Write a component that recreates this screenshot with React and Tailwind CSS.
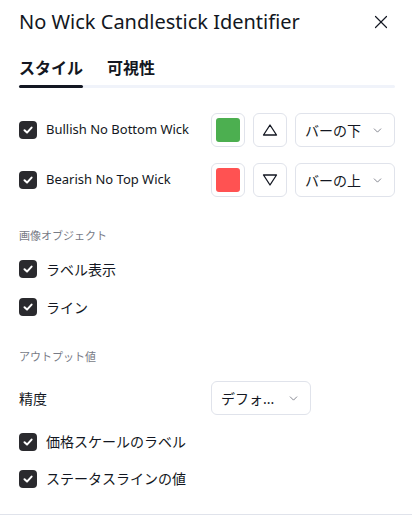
import { X, ChevronDown } from 'lucide-react';

const font = { fontFamily: '"Noto Sans", "Noto Sans CJK JP", sans-serif' };

function Check({ label, latin }) {
    return (
        <label className={`flex items-center gap-[9px] ${latin ? 'text-[13px]' : 'text-[14px]'} text-[#131722]`}>
            <span className="w-[18px] h-[18px] rounded-[4px] bg-[#2a2a2e] flex items-center justify-center">
                <svg width="12" height="12" viewBox="0 0 12 12" fill="none">
                    <path d="M2.5 6.3 L5 8.6 L9.6 3.6" stroke="white" strokeWidth="2" strokeLinecap="round" strokeLinejoin="round" />
                </svg>
            </span>
            <span>{label}</span>
        </label>
    );
}

function Select({ value, width = 'w-[100px]' }) {
    return (
        <div className={`${width} h-[34px] border border-[#e0e3eb] rounded-[6px] flex items-center justify-between pl-[9px] pr-[10px] text-[14px] text-[#131722]`}>
            <span>{value}</span>
            <ChevronDown className="w-[13px] h-[13px] text-[#6a6d78]" strokeWidth={1.5} />
        </div>
    );
}

function PlotRow({ label, color, up, place }) {
    return (
        <div className="flex items-center h-[34px]">
            <div className="flex-1">
                <Check label={label} latin />
            </div>
            <div className="flex items-center gap-2">
                <div className="w-[34px] h-[34px] border border-[#e0e3eb] rounded-[6px] flex items-center justify-center">
                    <div className={`w-[24px] h-[24px] rounded-[3px] ${color}`} />
                </div>
                <div className="w-[34px] h-[34px] border border-[#e0e3eb] rounded-[6px] flex items-center justify-center">
                    <svg width="16" height="14" viewBox="0 0 16 14" fill="none">
                        {up ? (
                            <path d="M8 2 L14.5 12 L1.5 12 Z" stroke="#131722" strokeWidth="1.3" strokeLinejoin="round" />
                        ) : (
                            <path d="M8 12 L14.5 2 L1.5 2 Z" stroke="#131722" strokeWidth="1.3" strokeLinejoin="round" />
                        )}
                    </svg>
                </div>
                <Select value={place} />
            </div>
        </div>
    );
}

export default function App() {
    return (
        <div className="w-[412px] h-[516px] bg-white overflow-hidden" style={font}>
            <div className="h-[44px] flex items-center justify-between pl-[19px] pr-[20px]">
                <h1 className="text-[20px] text-[#131722]">No Wick Candlestick Identifier</h1>
                <X className="w-[22px] h-[22px] text-[#131722]" strokeWidth={1.3} />
            </div>

            <div className="px-[19px] pr-[17px]">
                <div className="pt-[14px] flex gap-[24px] h-[34px] text-[16px] font-bold text-[#131722] leading-[20px]">
                    <span>スタイル</span>
                    <span>可視性</span>
                </div>
                <div className="mt-[7px] h-[3px] bg-[#f0f3fa] rounded-full">
                    <div className="w-[64px] h-[3px] bg-[#131722] rounded-full" />
                </div>

                <div className="mt-[25px] flex flex-col gap-4">
                    <PlotRow label="Bullish No Bottom Wick" color="bg-[#4caf50]" up place="バーの下" />
                    <PlotRow label="Bearish No Top Wick" color="bg-[#ff5252]" place="バーの上" />
                </div>

                <div className="mt-[31px] h-[16px] text-[11px] leading-[16px] text-[#787b86]">画像オブジェクト</div>
                <div className="mt-[6px]">
                    <div className="h-[38px] flex items-center"><Check label="ラベル表示" /></div>
                    <div className="h-[38px] flex items-center"><Check label="ライン" /></div>
                </div>

                <div className="mt-[23px] h-[16px] text-[11px] leading-[16px] text-[#787b86]">アウトプット値</div>
                <div className="mt-4 flex items-center h-[34px]">
                    <div className="w-[192px] text-[14px] text-[#131722]">精度</div>
                    <Select value="デフォ..." width="w-[100px]" />
                </div>
                <div className="mt-[8px]">
                    <div className="h-[37px] flex items-center"><Check label="価格スケールのラベル" /></div>
                    <div className="h-[37px] flex items-center"><Check label="ステータスラインの値" /></div>
                </div>
            </div>
            <div className="mt-[17px] border-t border-[#e0e3eb]" />
        </div>
    );
}
